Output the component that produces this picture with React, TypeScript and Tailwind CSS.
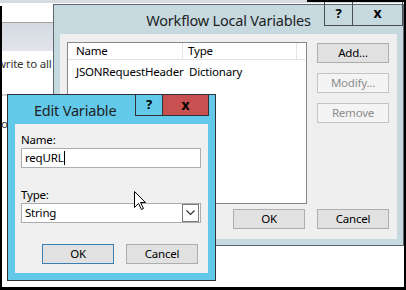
import React from "react";

const font = { fontFamily: '"Noto Sans", "Open Sans", sans-serif' };

function Btn({ label, w = "w-[72px]", variant = "normal" }: { label: string; w?: string; variant?: "normal" | "disabled" | "default" }) {
  const cls =
    variant === "disabled"
      ? "border-[#c4c4c4] bg-[#f4f4f4] text-[#8d8d8d]"
      : variant === "default"
      ? "border-[#3c7fb1] bg-[#e1e1e1] text-black"
      : "border-[#adadad] bg-[#e1e1e1] text-black";
  return (
    <div className={`${w} h-[20px] border ${cls} flex items-center justify-center text-[11.5px] tracking-[-0.2px] leading-none`}>
      {label}
    </div>
  );
}

function Cursor() {
  return (
    <svg width="13" height="21" viewBox="0 0 13 21" className="absolute left-[133px] top-[190px]">
      <path d="M1.5 1.5 L1.5 17.5 L5.5 13.5 L8.5 19.5 L10.5 18.5 L7.5 12.5 L12.5 12.5 Z" fill="#fff" stroke="#000" strokeWidth="1" strokeLinejoin="miter" />
    </svg>
  );
}

export default function App() {
  return (
    <div className="relative w-[406px] h-[290px] overflow-hidden bg-white" style={font}>
      {/* background window */}
      <div className="absolute inset-0 flex flex-col">
        <div className="h-[3px] bg-[#d7dbe2]" />
        <div className="h-[19px] bg-white" />
        <div className="h-[1px] bg-[#a3a3a3]" />
        <div className="h-[28px] bg-gradient-to-b from-[#d5dae2] to-[#e1e4ea]" />
        <div className="flex-1 bg-white relative">
          <div className="-ml-[3px] pt-[5px] text-[11.5px] tracking-[-0.2px] leading-[16px] text-[#333] whitespace-nowrap">write to all</div>
          <div className="mt-[22px] h-[2px] bg-[#d4d4d4] w-[60px]" />
          <div className="mt-[20px] text-[11.5px] leading-[16px] text-[#333] pl-[1px]">or</div>
        </div>
      </div>

      {/* Workflow Local Variables */}
      <div className="absolute left-[53px] top-[4px] w-[351px] h-[242px] border border-[#5f666e] bg-[#c5d9df] flex flex-col">
        <div className="h-[29px] relative flex items-center">
          <div className="w-full text-center text-[14.5px] leading-none text-[#1e1e1e] pt-[1px] tracking-[-0.2px]">
            Workflow Local Variables
          </div>
          <div className="absolute right-[0px] -top-[4px] flex h-[25px] border border-[#4a4f57]">
            <div className="w-[28px] flex items-center justify-center border-r border-[#4a4f57] text-[13px] font-bold">?</div>
            <div className="w-[49px] flex items-center justify-center text-[14px] font-bold pb-[2px]">x</div>
          </div>
        </div>
        <div className="mx-[6px] flex-1 bg-[#efefef] pl-[7px] pt-[8px] pr-[8px] mb-[6px] flex flex-col">
          <div className="flex">
            <div className="w-[240px] h-[162px] border border-[#828790] bg-white flex flex-col text-[11.5px] tracking-[-0.2px] text-black">
              <div className="h-[17px] flex border-b border-[#e5e5e5] leading-[16px]">
                <div className="w-[115px] pl-[8px] border-r border-[#e5e5e5]">Name</div>
                <div className="w-[114px] pl-[5px] border-r border-[#e5e5e5]">Type</div>
              </div>
              <div className="flex leading-[16px] pt-[4px]">
                <div className="w-[116px] pl-[8px] whitespace-nowrap">JSONRequestHeader</div>
                <div className="pl-[5px]">Dictionary</div>
              </div>
            </div>
            <div className="ml-[10px] mt-[1px] flex flex-col gap-[10px]">
              <Btn label="Add..." />
              <Btn label="Modify..." variant="disabled" />
              <Btn label="Remove" variant="disabled" />
            </div>
          </div>
          <div className="mt-[5px] flex justify-end gap-[12px]">
            <Btn label="OK" />
            <Btn label="Cancel" />
          </div>
        </div>
      </div>

      {/* Edit Variable */}
      <div className="absolute left-[7px] top-[94px] w-[209px] h-[187px] border border-[#2f3338] bg-[#63c9ea] flex flex-col">
        <div className="h-[29px] relative flex items-center">
          <div className="pl-[26px] pt-[1px] text-[14.5px] tracking-[-0.2px] leading-none text-[#1e1e1e]">Edit Variable</div>
          <div className="absolute right-[6px] -top-[1px] flex h-[22px] border border-[#2f3338]">
            <div className="w-[27px] flex items-center justify-center border-r border-[#2f3338] text-[13px] font-bold">?</div>
            <div className="w-[45px] bg-[#c75050] flex items-center justify-center text-[14px] font-bold pb-[2px]">x</div>
          </div>
        </div>
        <div className="mx-[7px] flex-1 mb-[7px] bg-[#f0f0f0] pl-[6px] pt-[8px] flex flex-col text-[11.5px] tracking-[-0.2px] text-black">
          <div className="h-[16px] leading-[16px]">Name:</div>
          <div className="w-[180px] h-[20px] border border-[#abadb3] bg-white flex items-center pl-[3px] leading-none">
            reqURL<span className="inline-block w-[1px] h-[14px] bg-black ml-[1px]" />
          </div>
          <div className="mt-[19px] h-[16px] leading-[16px]">Type:</div>
          <div className="w-[180px] h-[20px] border border-[#acacac] bg-white flex items-center pl-[3px] leading-none">
            <span className="flex-1">String</span>
            <div className="w-[17px] h-[18px] border border-[#7a7a7a] mr-[1px] flex items-center justify-center bg-white">
              <svg width="9" height="6" viewBox="0 0 9 6">
                <path d="M0.5 0.5 L4.5 4.5 L8.5 0.5" fill="none" stroke="#333" strokeWidth="1.2" />
              </svg>
            </div>
          </div>
          <div className="mt-[21px] flex pl-[21px] gap-[12px]">
            <Btn label="OK" variant="default" />
            <Btn label="Cancel" />
          </div>
        </div>
      </div>

      <Cursor />

      {/* outer black frame */}
      <div className="absolute left-0 top-[6px] bottom-0 w-[2px] bg-black" />
      <div className="absolute right-0 top-0 bottom-0 w-[2px] bg-black" />
      <div className="absolute left-0 right-0 bottom-0 h-[3px] bg-black" />
      <div className="absolute left-[307px] right-0 top-0 h-[2px] bg-black" />
    </div>
  );
}
